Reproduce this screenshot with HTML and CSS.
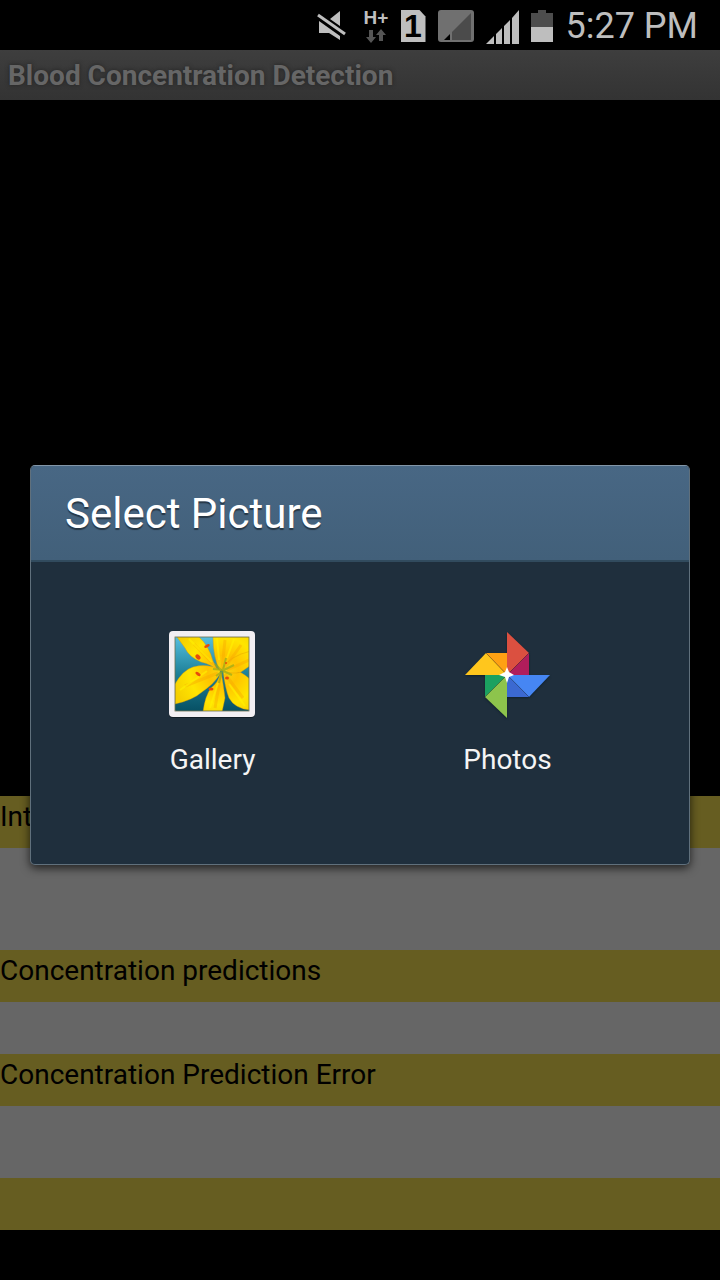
FILE: index.html
```html
<!DOCTYPE html>
<html lang="en">
<head>
<meta charset="utf-8">
<meta name="viewport" content="width=device-width, initial-scale=1">
<title>Blood Concentration Detection</title>
<link rel="stylesheet" href="styles.css">
</head>
<body>
<div class="screen">
  <div class="status-bar">
    <svg class="mute" width="30" height="30" viewBox="0 0 30 30" fill="#bebebe">
      <path d="M14 8 24 0v15zM3 10l21 15v4l-11-7H3z"/>
      <path d="M2 4 29 23" stroke="#bebebe" stroke-width="3"/>
    </svg>
    <div class="network">
      <span class="network-type">H+</span>
      <svg width="20" height="14" viewBox="0 0 20 14" fill="#555"><path d="M3 1h4v7h3l-5 6-5-6h3zM13 12V6h-3l5-6 5 6h-3v6z"/></svg>
    </div>
    <span class="sim">1</span>
    <svg width="36" height="32" viewBox="0 0 36 32">
      <rect width="36" height="32" rx="3" fill="#707070"/>
      <path d="M33 3v27H14V22z" fill="#4b4b4b"/>
      <path d="M12 24v6H6z" fill="#000"/>
    </svg>
    <svg class="signal" width="33" height="34" viewBox="0 0 33 34" fill="#bebebe"><path d="M0 34 8 26v8zM10 24l6-6v16h-6zM18 16l6-6v24h-6zM26 8l7-8v34h-7z"/></svg>
    <svg width="22" height="32" viewBox="0 0 22 32"><path d="M7 0h8v3h7v14H0V3h7z" fill="#4d4d4d"/><path d="M0 17h22v15H0z" fill="#bebebe"/></svg>
    <time class="clock">5:27 PM</time>
  </div>
  <header class="app-bar"><h1 class="app-title">Blood Concentration Detection</h1></header>
  <main class="content">
    <div class="preview"></div>
    <div class="label">Int</div>
    <div class="value value-large"></div>
    <div class="label">Concentration predictions</div>
    <div class="value"></div>
    <div class="label">Concentration Prediction Error</div>
    <div class="value value-medium"></div>
    <div class="label"></div>
    <div class="footer"></div>
  </main>
  <div class="overlay">
    <section class="dialog" role="dialog" aria-labelledby="dialog-title">
      <h2 class="dialog-title" id="dialog-title">Select Picture</h2>
      <div class="choices">
        <button class="choice" type="button">
          <svg width="96" height="96" viewBox="0 0 96 96">
            <defs>
              <linearGradient id="sky" x1="0" y1="0" x2="0" y2="1"><stop offset="0" stop-color="#55bedf"/><stop offset=".5" stop-color="#1d8098"/><stop offset="1" stop-color="#075064"/></linearGradient>
              <radialGradient id="petal" gradientUnits="userSpaceOnUse" cx="58" cy="45" r="52"><stop offset="0" stop-color="#f4d913"/><stop offset=".3" stop-color="#ffc300"/><stop offset=".65" stop-color="#ffe500"/><stop offset="1" stop-color="#f5cf00"/></radialGradient>
              <clipPath id="photo"><rect x="10" y="11" width="74" height="74" rx="1"/></clipPath>
            </defs>
            <rect x="4" y="6" width="86" height="86" rx="4" fill="#111d26"/>
            <rect x="4" y="5" width="86" height="86" rx="4" fill="#f2eff3"/>
            <g clip-path="url(#photo)">
              <rect x="10" y="11" width="74" height="74" fill="url(#sky)"/>
              <g fill="url(#petal)" stroke="#df9700" stroke-width=".4">
                <path d="M48 11h38v14L74 38 55 45Q48 31 48 11z"/>
                <path d="M12 11h22q10 9 14 24l5 11Q47 38 36 36 24 31 20 22z"/>
                <path d="M55 44Q43 37 28 41 18 44 10 58v20Q28 74 37 66 49 58 55 48z"/>
                <path d="M56 46Q59 63 60 72L57 86H38Q40 70 46 62 53 57 56 46z"/>
                <path d="M58 44Q67 47 75 46 82 50 86 54V84Q70 83 64 72 60 62 58 44z"/>
                <path d="M56 44Q64 30 86 25V39L76 46Q68 49 56 44z"/>
              </g>
              <g fill="none" stroke="#f7a500" stroke-width="3" opacity=".4"><path d="M57 43 60 14M59 43 76 19M53 43 29 18M53 47 20 60M56 48 50 82M60 48 78 72M62 44 84 34"/></g>
              <g fill="none" stroke="#fff200" stroke-width="2" opacity=".6"><path d="M54 34 52 12M62 32 69 13M47 36 24 13M42 45 15 64M53 57 45 82M64 58 80 80"/></g>
              <path d="m48 43 10 1 3-12M50 38l7 7 12-6M51 50l7-5 9 4M57 45l-3 12" fill="none" stroke="#91a81a" stroke-width="2" opacity=".65"/>
              <g fill="#e74b0b"><ellipse cx="33" cy="31" rx="3" ry="2" transform="rotate(45 33 31)"/><ellipse cx="42" cy="20" rx="3" ry="1.500" transform="rotate(-25 42 20)"/><ellipse cx="33" cy="48" rx="3" ry="1.500" transform="rotate(35 33 48)"/><ellipse cx="46" cy="63" rx="2.500" ry="1.500"/><ellipse cx="62" cy="52" rx="2" ry="1.500"/><circle cx="61" cy="37" r="1"/></g>
            </g>
            <rect x="10" y="11" width="74" height="74" fill="none" stroke="#6c6f4b" stroke-width=".8"/>
          </svg>
          <span class="choice-label">Gallery</span>
        </button>
        <button class="choice" type="button">
          <svg class="pinwheel" width="96" height="96" viewBox="0 0 96 96">
            <path d="M47 49H5l21-22z" fill="#ffc61d"/><path d="M26 27h21v22z" fill="#ffa113"/>
            <path d="M47 6v43l22-22z" fill="#db5040"/><path d="M69 27v22H47z" fill="#b01d5b"/>
            <path d="M47 49h43L69 71z" fill="#4686f3"/><path d="M47 49v22h22z" fill="#3b69d1"/>
            <path d="M47 49H25v22z" fill="#1ba160"/><path d="M47 49v43L25 71z" fill="#8dc44c"/>
            <path d="m26 27 43 44M69 27 25 71" stroke="#222" stroke-width=".5" opacity=".5"/>
            <path d="m47 41 2 5 5 3-5 2-2 6-2-6-6-2 6-3z" fill="#fff"/>
          </svg>
          <span class="choice-label">Photos</span>
        </button>
      </div>
    </section>
  </div>
</div>
</body>
</html>
```
FILE: styles.css
```css
* { box-sizing: border-box; }
body { margin: 0; background: #000; font-family: Roboto, sans-serif; }
svg { display: block; flex: none; }
.screen { position: relative; min-height: 100vh; display: flex; flex-direction: column; }
.status-bar { height: 50px; padding: 2px 22px 0 0; display: flex; justify-content: flex-end; align-items: center; gap: 12px; color: #bebebe; }
.mute { margin-right: 6px; }
.network { display: flex; flex-direction: column; align-items: center; gap: 3px; width: 25px; }
.network-type { font: 700 19px/16px "Liberation Sans", sans-serif; }
.sim { width: 25px; height: 32px; background: #bebebe; color: #000; font: 700 32px/32px "Liberation Sans", sans-serif; text-align: center; clip-path: polygon(0 0, 76% 0, 100% 20%, 100% 100%, 0 100%); }
.signal { margin-top: 2px; }
.clock { font-size: 36px; line-height: 44px; margin-left: 1px; }
.app-bar { height: 50px; padding: 2px 8px 0; display: flex; align-items: center; background: linear-gradient(#3e3e3e, #333); }
.app-title { margin: 0; font-size: 28px; line-height: 34px; font-weight: 700; color: #666; text-shadow: 0 0 4px #222; }
.content { flex: 1; display: flex; flex-direction: column; }
.preview { flex: 1; }
.label { height: 52px; padding-top: 4px; background: #665d21; color: #000; font-size: 28px; line-height: 33px; }
.value { height: 52px; background: #666; }
.value-medium { height: 72px; }
.value-large { height: 102px; }
.footer { height: 50px; }
.overlay { position: absolute; inset: 50px 0 0; padding: 0 30px; display: flex; align-items: center; }
.dialog { flex: 1; border: 1px solid #60707c; border-top-color: #8296a8; border-radius: 5px; overflow: hidden; background: #1f2f3d; box-shadow: 0 3px 10px rgba(0, 0, 0, .7); }
.dialog-title { margin: 0; padding: 22px 34px 20px; border-bottom: 2px solid #314b5e; background: linear-gradient(#486784, #42607a); color: #fff; font-size: 42px; line-height: 52px; font-weight: 400; text-shadow: 0 2px 1px rgba(0, 0, 0, .45); }
.choices { display: grid; grid-template-columns: 1fr 1fr; padding: 48px 34px 72px; }
.choice { display: flex; flex-direction: column; align-items: center; gap: 21px; padding: 16px 0; border: 0; background: none; color: #f5f5f5; font: 400 28px/33px Roboto, sans-serif; }
.pinwheel { filter: drop-shadow(0 1px 1px #0e202b); }
```
